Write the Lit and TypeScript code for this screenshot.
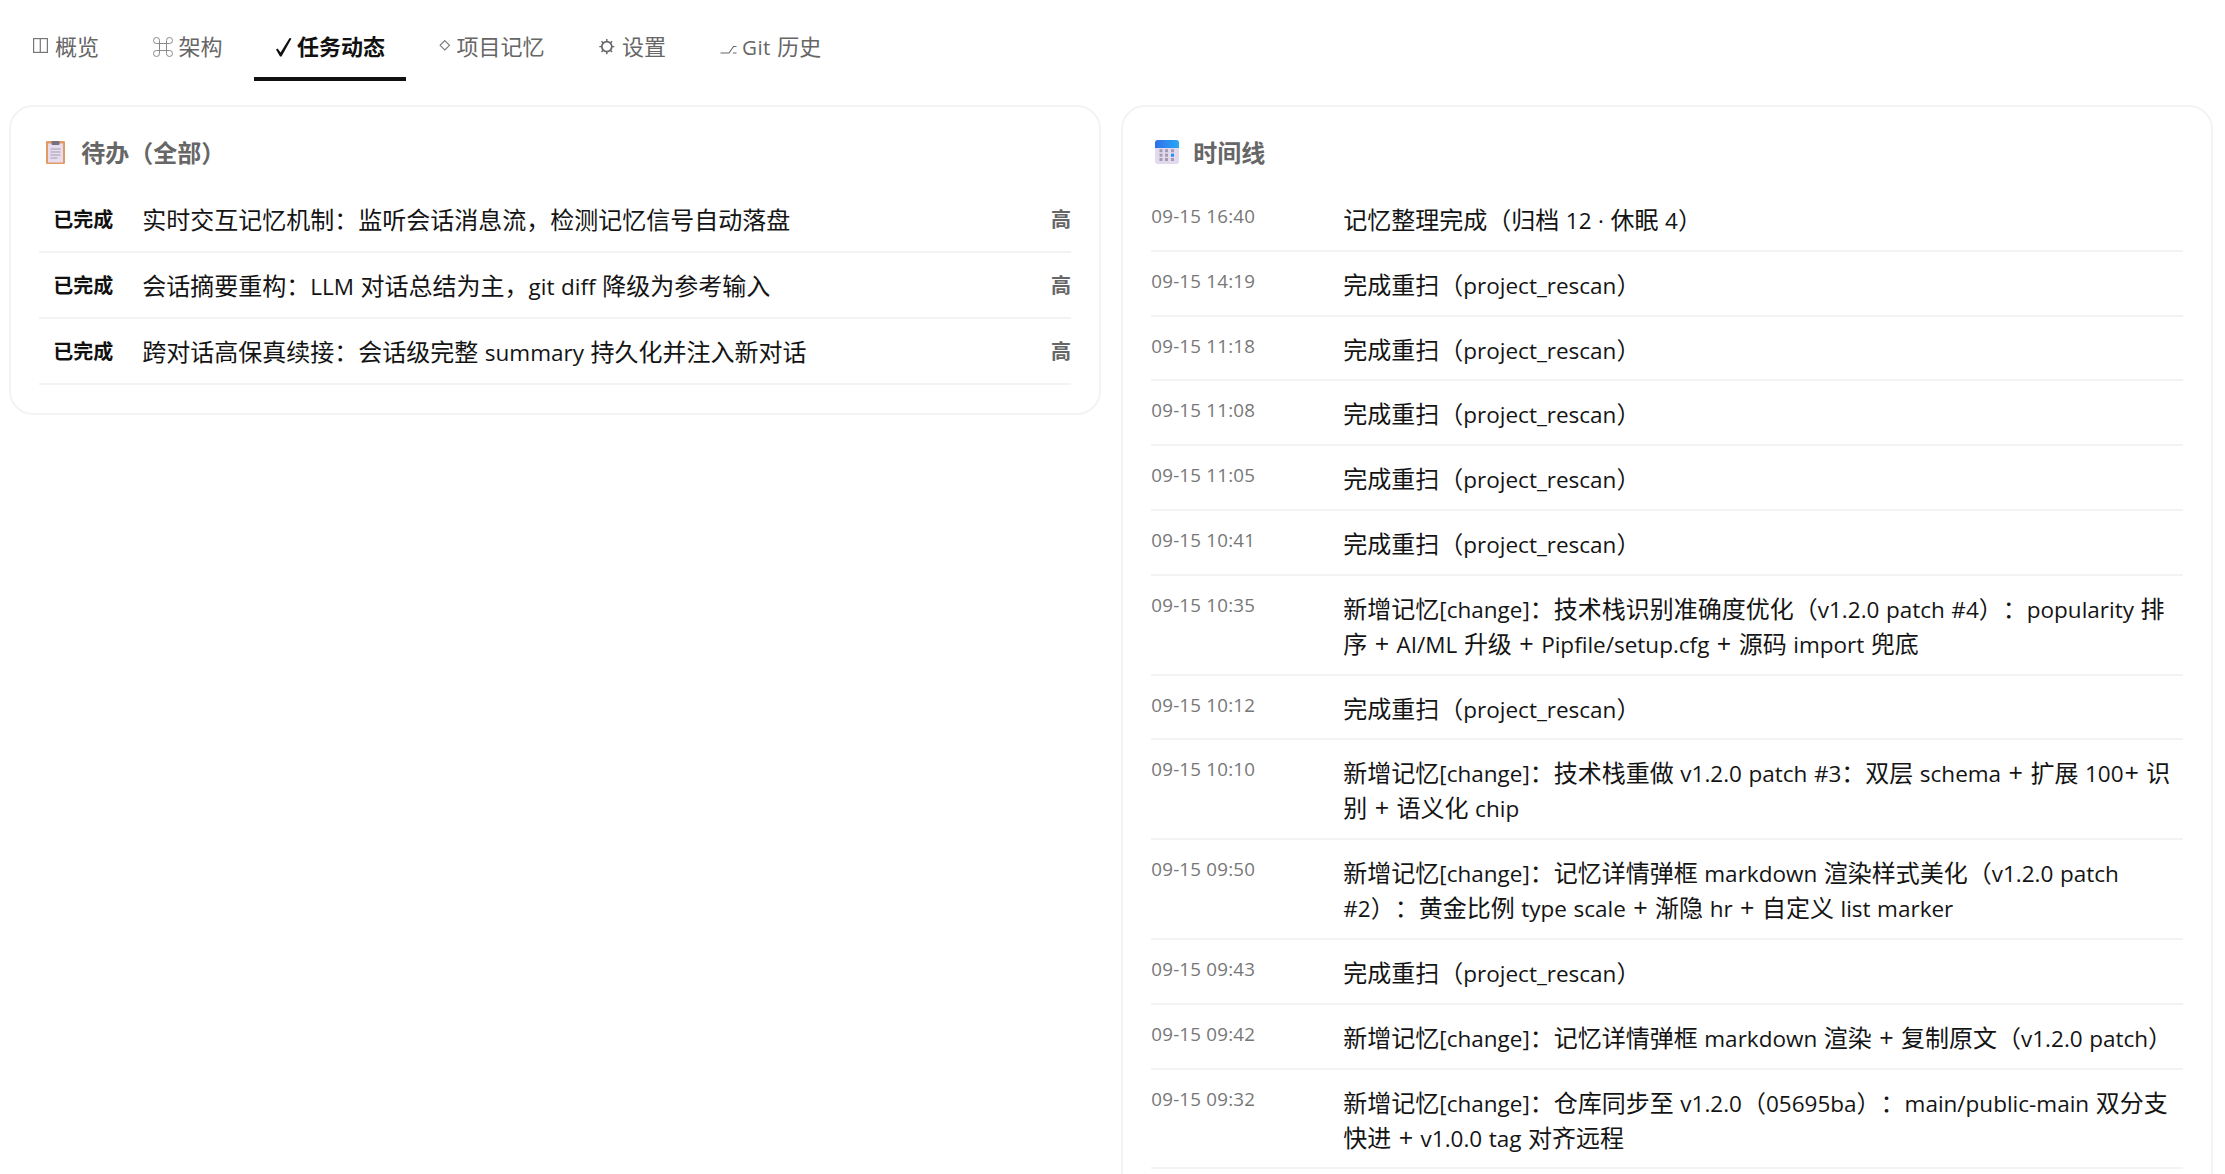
import { LitElement, html, css, svg } from "lit";
import { customElement } from "lit/decorators.js";

const ICON: Record<string, unknown> = {
  overview: svg`<rect x="0.6" y="1.6" width="13.8" height="13.8" fill="none" stroke="#777" stroke-width="1.2"/><path d="M7.3 1.6v13.8" stroke="#777" stroke-width="1.2"/>`,
  arch: svg`<path d="M6.5 6.5H3.7A3 3 0 1 1 6.5 3.7V16.3A3 3 0 1 1 3.7 13.5H16.3A3 3 0 1 1 13.5 16.3V3.7A3 3 0 1 1 16.3 6.5Z" fill="none" stroke="#8a8a8a" stroke-width="1"/>`,
  check: svg`<path d="M1 12.5L2.6 11.5L5.6 15.5L14.5 1L16.5 1.5L6.5 19.5L5 19.5Z" fill="#111"/>`,
  memory: svg`<path d="M5 3.6L9.7 8.3L5 13L0.3 8.3Z" fill="none" stroke="#777" stroke-width="1.1"/>`,
  settings: svg`<circle cx="7.5" cy="9.6" r="5" fill="none" stroke="#666" stroke-width="1.7"/><path d="M7.5 2v2.4M7.5 14.8v2.4M0 9.6h2.4M12.6 9.6h2.4M2.2 4.3l1.7 1.7M11.1 13.2l1.7 1.7M12.8 4.3l-1.7 1.7M3.9 13.2l-1.7 1.7" stroke="#666" stroke-width="1.4"/>`,
  git: svg`<path d="M0 16H8.5L13 9.5H16M12.5 16H16" fill="none" stroke="#666" stroke-width="1.1"/>`,
};

const TABS = [
  { k: "overview", w: 22, b: 0, t: "概览" },
  { k: "arch", w: 27, b: 1, t: "架构" },
  { k: "check", w: 22, b: 0, t: "任务动态", on: true },
  { k: "memory", w: 19, b: 1.8, t: "项目记忆" },
  { k: "settings", w: 25, b: 2.3, t: "设置" },
  { k: "git", w: 23.5, b: 1.5, t: "Git 历史" },
];

const TODOS = [
  "实时交互记忆机制：监听会话消息流，检测记忆信号自动落盘",
  "会话摘要重构：LLM 对话总结为主，git diff 降级为参考输入",
  "跨对话高保真续接：会话级完整 summary 持久化并注入新对话",
];

const RESCAN = ["完成重扫（project_rescan）"];
const TL: [string, string[]][] = [
  ["09-15 16:40", ["记忆整理完成（归档 12 · 休眠 4）"]],
  ["09-15 14:19", RESCAN],
  ["09-15 11:18", RESCAN],
  ["09-15 11:08", RESCAN],
  ["09-15 11:05", RESCAN],
  ["09-15 10:41", RESCAN],
  ["09-15 10:35", ["新增记忆[change]：技术栈识别准确度优化（v1.2.0 patch #4）：popularity 排", "序 + AI/ML 升级 + Pipfile/setup.cfg + 源码 import 兜底"]],
  ["09-15 10:12", RESCAN],
  ["09-15 10:10", ["新增记忆[change]：技术栈重做 v1.2.0 patch #3：双层 schema + 扩展 100+ 识", "别 + 语义化 chip"]],
  ["09-15 09:50", ["新增记忆[change]：记忆详情弹框 markdown 渲染样式美化（v1.2.0 patch", "#2）：黄金比例 type scale + 渐隐 hr + 自定义 list marker"]],
  ["09-15 09:43", RESCAN],
  ["09-15 09:42", ["新增记忆[change]：记忆详情弹框 markdown 渲染 + 复制原文（v1.2.0 patch）"]],
  ["09-15 09:32", ["新增记忆[change]：仓库同步至 v1.2.0（05695ba）：main/public-main 双分支", "快进 + v1.0.0 tag 对齐远程"]],
];

const latin = (s: string) =>
  s.split(/(\+)/).map((p, i) => (i % 2 ? html`<span class="p">${p}</span>` : p));
const mixed = (s: string) =>
  s.split(/([\x20-\x7e·]+)/).map((p, i) => (i % 2 ? html`<span class="l">${latin(p)}</span>` : p));

@customElement("app-root")
export class AppRoot extends LitElement {
  static styles = css`
    :host {
      display: block;
      height: 1174px;
      overflow: hidden;
      background: #fff;
      font-family: "Noto Sans CJK SC", sans-serif;
      text-spacing-trim: space-all;
      color: #141414;
      font-size: 24px;
    }
    .l {
      font-family: "Open Sans", sans-serif;
      font-size: 0.9375em;
      line-height: 0;
      white-space: pre;
      word-spacing: 0.7px;
    }
    .p { font-size: 1.12em; padding: 0 0.9px; }
    .page { padding: 17px 12px 0 9.3px; box-sizing: border-box; }
    nav { display: flex; gap: 10.5px; padding-left: 2.7px; margin-bottom: 24px; }
    .tab {
      display: flex;
      align-items: center;
      white-space: pre;
      padding: 12px 21px 15px;
      border-bottom: 4px solid transparent;
      font-size: 22px;
      line-height: 33px;
      color: #666;
    }
    .tab .l { letter-spacing: 0.4px; }
    .tab.on { color: #111; font-weight: 700; border-bottom-color: #111; }
    .tab svg { flex: none; height: 20px; margin-top: 2.8px; }
    .cols { display: grid; grid-template-columns: 1fr 1fr; gap: 20.3px; align-items: start; }
    .card {
      border: 2px solid #f3f3f4;
      border-radius: 24px;
      padding: 27px 28px 28px;
      background: #fff;
    }
    .title {
      display: flex;
      align-items: center;
      font-size: 24px;
      line-height: 36px;
      font-weight: 700;
      color: #666;
      margin-bottom: 17px;
    }
    .ic { flex: none; margin-right: 16px; margin-left: 7px; }
    .tl .ic { margin-left: 4px; margin-right: 14px; }
    .todo {
      display: grid;
      grid-template-columns: 60px 1fr auto;
      column-gap: 29px;
      align-items: center;
      padding: 14px 0 14px 14px;
      border-bottom: 2px solid #f3f3f4;
      line-height: 36px;
    }
    .st { font-size: 20px; font-weight: 700; white-space: nowrap; color: #111; }
    .pr { font-size: 20px; font-weight: 700; color: #666; }
    .row {
      display: grid;
      grid-template-columns: 168px 1fr;
      column-gap: 24px;
      padding: 14px 0 13.8px;
      border-bottom: 2px solid #f3f3f4;
      line-height: 35px;
    }
    .ln { display: block; white-space: nowrap; }
    .time {
      font-family: "Open Sans", sans-serif;
      font-size: 18.75px;
      letter-spacing: 0.2px;
      color: #777;
      line-height: 30px;
    }
  `;

  render() {
    return html`<div class="page">
      <nav>
        ${TABS.map(
          (t) => html`<div class="tab ${t.on ? "on" : ""}"><svg style="width:${t.w}px" viewBox="${-t.b} 0 ${t.w} 20">${ICON[t.k]}</svg><span>${mixed(t.t)}</span></div>`
        )}
      </nav>
      <div class="cols">
        <section class="card">
          <div class="title">
            <svg class="ic" width="19" height="23" viewBox="0 0 19 23">
              <rect width="19" height="23" rx="1.2" fill="#e39a63"/>
              <rect x="2" y="2.5" width="15" height="19" fill="#e7dcee"/>
              <rect x="5.5" y="0" width="8" height="4" rx="1" fill="#77707f"/>
              <path d="M4.5 8h10M4.5 11h10M4.5 14h10M4.5 17h7" stroke="#a59bb0" stroke-width="1"/>
            </svg>
            待办（全部）
          </div>
          ${TODOS.map(
            (t) => html`<div class="todo"><span class="st">已完成</span><span>${mixed(t)}</span><span class="pr">高</span></div>`
          )}
        </section>
        <section class="card tl">
          <div class="title">
            <svg class="ic" width="24" height="24" viewBox="0 0 24 24">
              <defs><linearGradient id="cal" x1="0" y1="0" x2="1" y2="0"><stop offset="0" stop-color="#2f6fe8"/><stop offset="1" stop-color="#27a8f5"/></linearGradient></defs>
              <rect width="24" height="24" rx="3" fill="#e3d9ef"/>
              <path d="M0 8V3a3 3 0 0 1 3-3h18a3 3 0 0 1 3 3v5z" fill="url(#cal)"/>
              <g fill="#a59bb0">
                <rect x="4.5" y="9.2" width="3" height="3"/><rect x="10" y="9.2" width="3" height="3"/><rect x="16" y="9.2" width="3" height="3"/>
                <rect x="4.5" y="13.7" width="3" height="3"/><rect x="10" y="13.7" width="3" height="3"/>
                <rect x="4.5" y="18" width="3" height="3"/><rect x="10" y="18" width="3" height="3"/><rect x="16" y="18" width="3" height="3"/>
              </g>
              <rect x="16" y="13.7" width="3" height="3" fill="#1f8ef0"/>
            </svg>
            时间线
          </div>
          ${TL.map(
            ([a, b]) => html`<div class="row"><span class="time">${a}</span><div>${b.map((l) => html`<span class="ln">${mixed(l)}</span>`)}</div></div>`
          )}
        </section>
      </div>
    </div>`;
  }
}
